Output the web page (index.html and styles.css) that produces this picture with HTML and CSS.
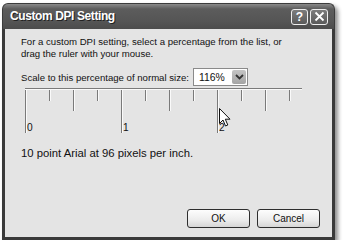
FILE: index.html
```html
<!DOCTYPE html>
<html lang="en">
<head>
    <meta charset="UTF-8">
    <title>Custom DPI Setting</title>
    <link rel="stylesheet" href="styles.css">
</head>
<body>
    <div class="window">
        <div class="titlebar">
            <span class="title">Custom DPI Setting</span>
            <div class="controls">
                <span class="ctl">?</span>
                <span class="ctl">
                    <svg width="11" height="11" viewBox="0 0 11 11"><path d="M1.5 1.5 L9.5 9.5 M9.5 1.5 L1.5 9.5" stroke="#fff" stroke-width="1.8"/></svg>
                </span>
            </div>
        </div>
        <div class="panel">
            <p class="intro">For a custom DPI setting, select a percentage from the list, or<br>drag the ruler with your mouse.</p>

            <div class="scale-row">
                <span class="scale-label">Scale to this percentage of normal size:</span>
                <div class="combo">
                    <span class="combo-value">116%</span>
                    <span class="combo-arrow">
                        <svg width="9" height="6" viewBox="0 0 9 6"><path d="M1 1 L4.5 4.5 L8 1" fill="none" stroke="#333" stroke-width="1.8"/></svg>
                    </span>
                </div>
            </div>

            <div class="ruler">
                <svg width="290" height="48" viewBox="0 0 290 48">
                    <g stroke="#7a7a7a" stroke-width="1">
                        <line x1="4" y1="1.5" x2="281" y2="1.5"/>
                        <line x1="4.5" y1="1" x2="4.5" y2="46"/>
                        <line x1="28.5" y1="1" x2="28.5" y2="14"/>
                        <line x1="52.5" y1="1" x2="52.5" y2="24"/>
                        <line x1="76.5" y1="1" x2="76.5" y2="14"/>
                        <line x1="100.5" y1="1" x2="100.5" y2="46"/>
                        <line x1="124.5" y1="1" x2="124.5" y2="14"/>
                        <line x1="148.5" y1="1" x2="148.5" y2="24"/>
                        <line x1="172.5" y1="1" x2="172.5" y2="14"/>
                        <line x1="196.5" y1="1" x2="196.5" y2="46"/>
                        <line x1="220.5" y1="1" x2="220.5" y2="14"/>
                        <line x1="244.5" y1="1" x2="244.5" y2="24"/>
                        <line x1="268.5" y1="1" x2="268.5" y2="14"/>
                    </g>
                    <g stroke="#fafafa" stroke-width="1">
                        <line x1="4" y1="2.5" x2="281" y2="2.5"/>
                        <line x1="5.5" y1="3" x2="5.5" y2="46"/>
                        <line x1="29.5" y1="3" x2="29.5" y2="14"/>
                        <line x1="53.5" y1="3" x2="53.5" y2="24"/>
                        <line x1="77.5" y1="3" x2="77.5" y2="14"/>
                        <line x1="101.5" y1="3" x2="101.5" y2="46"/>
                        <line x1="125.5" y1="3" x2="125.5" y2="14"/>
                        <line x1="149.5" y1="3" x2="149.5" y2="24"/>
                        <line x1="173.5" y1="3" x2="173.5" y2="14"/>
                        <line x1="197.5" y1="3" x2="197.5" y2="46"/>
                        <line x1="221.5" y1="3" x2="221.5" y2="14"/>
                        <line x1="245.5" y1="3" x2="245.5" y2="24"/>
                        <line x1="269.5" y1="3" x2="269.5" y2="14"/>
                    </g>
                    <g class="ruler-nums">
                        <text x="6" y="44">0</text>
                        <text x="102" y="44">1</text>
                        <text x="198" y="44">2</text>
                    </g>
                </svg>
                <svg class="pointer" width="12" height="20" viewBox="0 0 12 20">
                    <path d="M0.5 0.5 L0.5 15.5 L4 12 L6.5 18 L8.8 17 L6.3 11.2 L11 11.2 Z" fill="#fff" stroke="#111" stroke-width="1"/>
                </svg>
            </div>

            <p class="sample">10 point Arial at 96 pixels per inch.</p>

            <div class="buttons">
                <button>OK</button>
                <button>Cancel</button>
            </div>
        </div>
    </div>
</body>
</html>
```

FILE: styles.css
```css
body {
    margin: 0;
    background-color: #fff;
    font-family: "Liberation Sans", Arial, sans-serif;
}
.window {
    margin: 3px 0 0 2px;
    width: 333px;
    height: 237px;
    display: flex;
    flex-direction: column;
    box-shadow: 3px 3px 4px rgba(0, 0, 0, 0.45);
    border-radius: 6px 6px 0 0;
}
.titlebar {
    height: 25px;
    flex: none;
    display: flex;
    align-items: center;
    justify-content: space-between;
    padding: 0 6px 0 7px;
    background: linear-gradient(#8a8a8a, #5c5c5c 20%, #555 70%, #4c4c4c);
    border-radius: 6px 6px 0 0;
    border: 1px solid #3c3c3c;
    border-bottom: none;
}
.title {
    color: #fff;
    font-weight: bold;
    font-size: 12px;
    letter-spacing: -0.4px;
    text-shadow: 1px 1px 0 #222;
    margin-top: -1px;
}
.controls {
    display: flex;
    gap: 2px;
}
.ctl {
    width: 15px;
    height: 14px;
    display: flex;
    align-items: center;
    justify-content: center;
    border: 1px solid #eee;
    border-radius: 3px;
    background: linear-gradient(#7c7c7c, #5a5a5a);
    color: #fff;
    font-weight: bold;
    font-size: 12px;
}
.ctl:last-child {
    width: 16px;
}
.panel {
    flex: 1;
    display: flex;
    flex-direction: column;
    background-color: #e4e4e4;
    border: 3px solid #3a3a3a;
    border-top: none;
    padding: 7px 12px 9px 16px;
    font-size: 9.6px;
    color: #111;
}
.intro {
    margin: 0;
    line-height: 12px;
}
.scale-row {
    display: flex;
    align-items: center;
    margin-top: 8px;
    height: 18px;
}
.scale-label {
    width: 172px;
}
.combo {
    width: 47px;
    height: 16px;
    display: flex;
    align-items: center;
    justify-content: space-between;
    background-color: #fff;
    border: 1px solid #8a8a8a;
    padding-left: 5px;
    padding-right: 1px;
    box-sizing: content-box;
}
.combo-value {
    font-size: 10.4px;
}
.combo-arrow {
    width: 14px;
    height: 14px;
    display: flex;
    align-items: center;
    justify-content: center;
    background: linear-gradient(#c4c4c4, #a4a4a4);
    border-radius: 2px;
}
.ruler {
    position: relative;
    margin-top: 1px;
    height: 48px;
}
.ruler svg {
    display: block;
}
.ruler-nums {
    font-family: "Liberation Sans", Arial, sans-serif;
    font-size: 10.2px;
    fill: #111;
}
.pointer {
    position: absolute;
    left: 198px;
    top: 21px;
}
.sample {
    margin: 11px 0 0 0;
    font-size: 11.3px;
    line-height: 14px;
}
.buttons {
    margin-top: auto;
    display: flex;
    justify-content: flex-end;
    gap: 7px;
}
button {
    width: 63px;
    height: 19px;
    padding: 0;
    border: 1px solid #2e2e2e;
    border-radius: 3px;
    background: linear-gradient(#fdfdfd, #ececec 60%, #d6d6d6);
    font-family: "Liberation Sans", Arial, sans-serif;
    font-size: 10px;
    color: #111;
}
```
